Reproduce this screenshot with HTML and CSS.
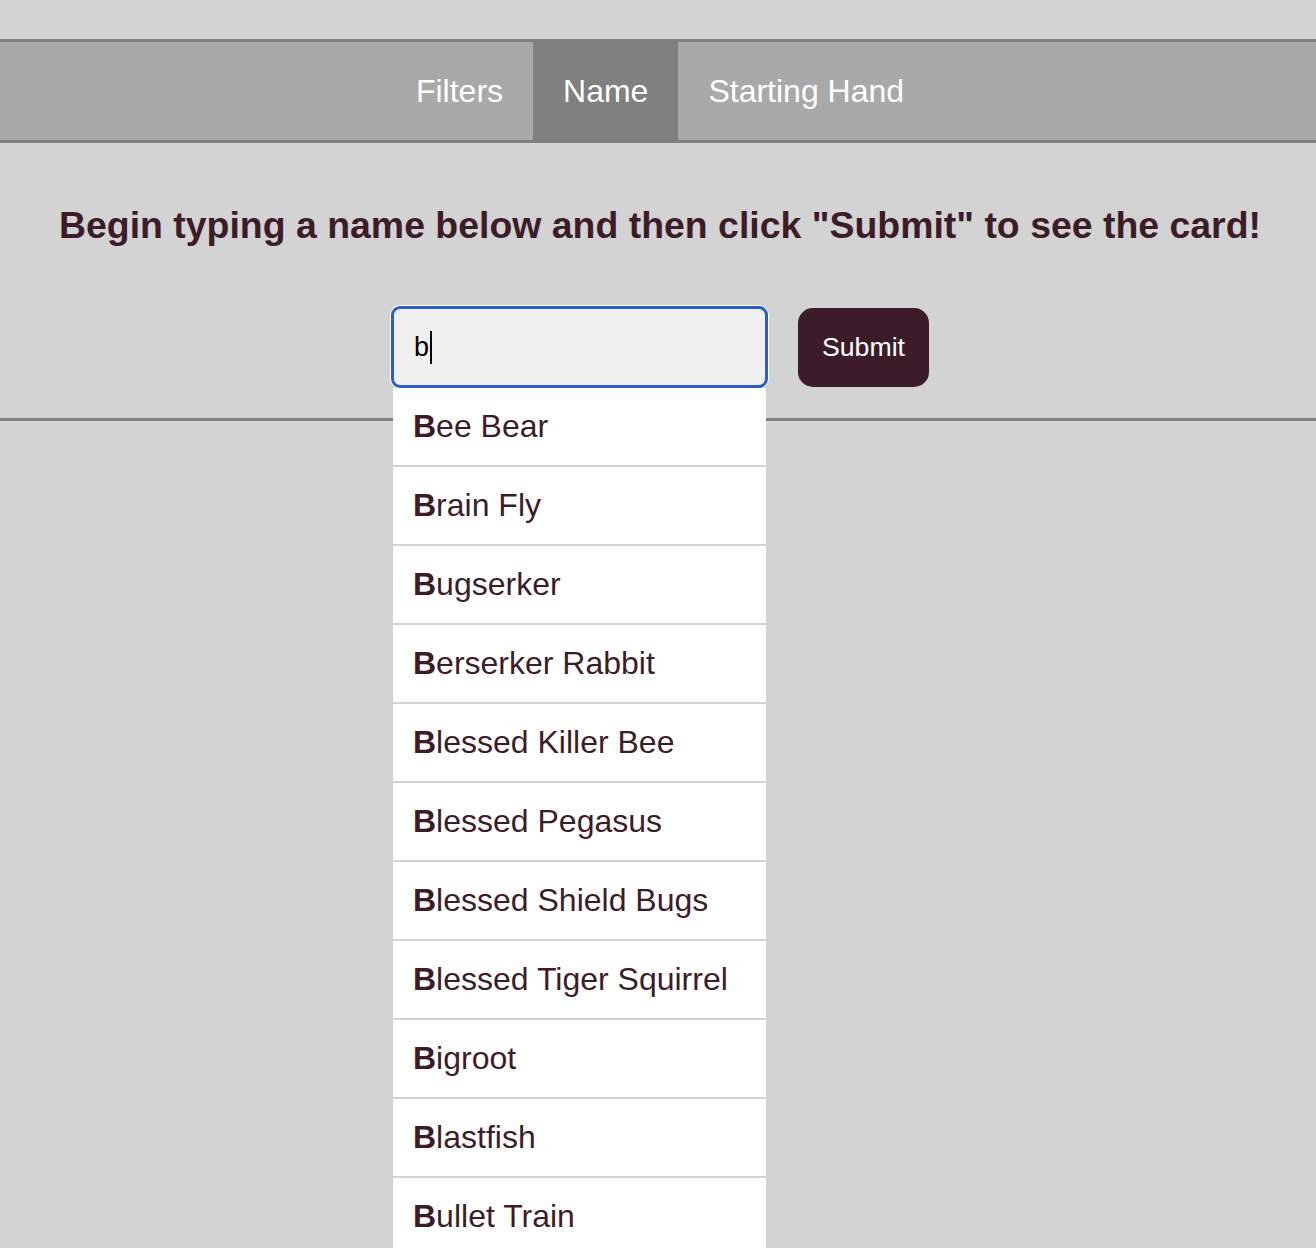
FILE: index.html
```html
<!DOCTYPE html>
<html lang="en">
<head>
<meta charset="utf-8">
<title>Card Search</title>
<link rel="stylesheet" href="styles.css">
</head>
<body>
<nav class="tabs">
  <a class="tab">Filters</a>
  <a class="tab active">Name</a>
  <a class="tab">Starting Hand</a>
</nav>
<section class="name-search">
  <h1 class="prompt">Begin typing a name below and then click "Submit" to see the card!</h1>
  <form class="search-row">
    <div class="autocomplete">
      <div class="name-input" role="textbox">b<span class="caret"></span></div>
      <ul class="suggestions">
        <li><b>B</b>ee Bear</li>
        <li><b>B</b>rain Fly</li>
        <li><b>B</b>ugserker</li>
        <li><b>B</b>erserker Rabbit</li>
        <li><b>B</b>lessed Killer Bee</li>
        <li><b>B</b>lessed Pegasus</li>
        <li><b>B</b>lessed Shield Bugs</li>
        <li><b>B</b>lessed Tiger Squirrel</li>
        <li><b>B</b>igroot</li>
        <li><b>B</b>lastfish</li>
        <li><b>B</b>ullet Train</li>
      </ul>
    </div>
    <button type="button" class="submit">Submit</button>
  </form>
</section>
<hr class="divider">
</body>
</html>
```
FILE: styles.css
```css
html, body {
  margin: 0;
  padding: 0;
}
body {
  background: #d3d3d3;
  font-family: "Liberation Sans", Arial, sans-serif;
  height: 1248px;
  overflow: hidden;
}
.tabs {
  margin-top: 39px;
  display: flex;
  justify-content: center;
  padding-left: 4px;
  background: #a9a9a9;
  border-top: 3px solid #808080;
  border-bottom: 3px solid #808080;
}
.tab {
  display: block;
  padding: 30px 30px;
  font-size: 32px;
  line-height: 38px;
  color: #fff;
}
.tab.active {
  background: #808080;
}
.name-search {
  display: flex;
  flex-direction: column;
  align-items: center;
  padding-left: 4px;
}
.prompt {
  margin: 60px 0 0;
  font-size: 37.44px;
  line-height: 44px;
  color: #3d1c2a;
  font-weight: bold;
  text-align: center;
}
.search-row {
  margin: 59px 0 0;
  display: flex;
  align-items: flex-start;
  gap: 30px;
  padding-left: 0;
}
.autocomplete {
  position: relative;
}
.name-input {
  box-sizing: border-box;
  width: 377px;
  height: 82px;
  border: 3px solid #2a5fca;
  border-radius: 9px;
  box-shadow: 0 0 0 1px #fff;
  background: #f0f0f0;
  padding-left: 20px;
  display: flex;
  align-items: center;
  font-size: 27px;
  color: #000;
}
.caret {
  display: inline-block;
  width: 2px;
  height: 33px;
  background: #000;
  margin-left: 1px;
}
.suggestions {
  position: absolute;
  top: 82px;
  left: 2px;
  width: 373px;
  margin: 0;
  padding: 0;
  list-style: none;
  background: #fff;
  z-index: 2;
}
.suggestions li {
  padding: 20px 20px;
  font-size: 32px;
  line-height: 37px;
  color: #3d1c2a;
  border-bottom: 2px solid #d3d3d3;
  white-space: nowrap;
}
.submit {
  margin-top: 2px;
  width: 131px;
  height: 79px;
  border: none;
  border-radius: 15px;
  background: #3d1c2a;
  color: #fff;
  font-family: "Liberation Sans", Arial, sans-serif;
  font-size: 26.67px;
  padding: 0;
}
.divider {
  margin: 30px 0 0;
  border: none;
  border-top: 3px solid #808080;
  height: 0;
}
```
